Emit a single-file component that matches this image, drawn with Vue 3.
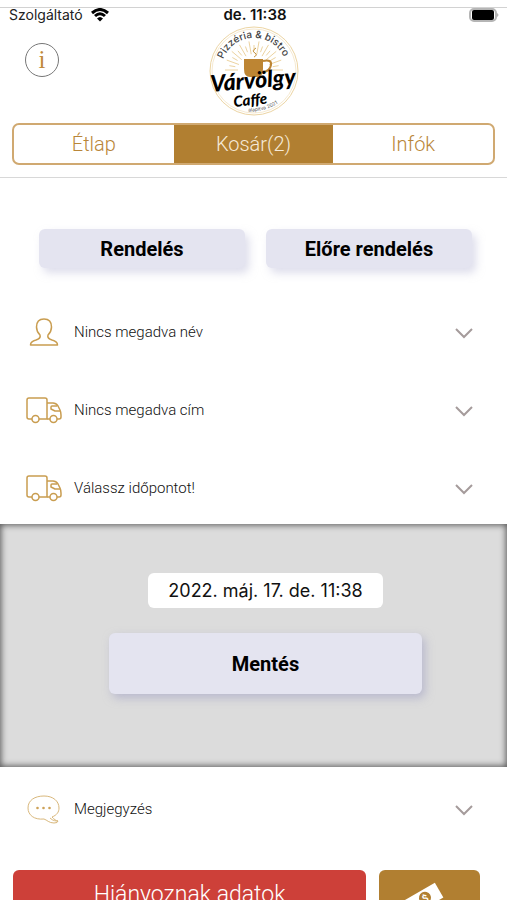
<template>
  <div class="screen">
    <div class="status-bar">
      <div class="carrier">
        <span>Szolgáltató</span>
        <svg class="wifi" viewBox="0 0 18 14" aria-hidden="true">
          <path d="M1 5 Q9 -2 17 5" />
          <path d="M4 8 Q9 3.500 14 8" />
          <path class="wifi-dot" d="M6 10.500 Q9 7.500 12 10.500 L9 13.500 Z" />
        </svg>
      </div>
      <div class="clock">de. 11:38</div>
      <svg class="battery" viewBox="0 0 32 14" aria-hidden="true">
        <rect x="1" y="1" width="26" height="12" rx="4" fill="#fff" stroke="#b5b5b5" stroke-width="2" />
        <rect x="3" y="2" width="22" height="10" rx="2" fill="#000" />
        <path d="M28 5 Q31 7 28 9 Z" fill="#b5b5b5" />
      </svg>
    </div>

    <header class="header">
      <div class="brand">
        <button class="info-button" type="button" aria-label="Info">i</button>
        <svg class="logo" viewBox="0 0 90 90" role="img" aria-label="Várvölgy Caffe">
          <circle cx="45" cy="45" r="44" fill="#fff" stroke="#ecd5a4" />
          <circle cx="45" cy="45" r="42" fill="none" stroke="#f6ead2" stroke-width="1" />
          <g stroke="#ecd3a0" stroke-width="1">
            <line v-for="ray in rays" :key="ray.id" :x1="ray.x1" :y1="ray.y1" :x2="ray.x2" :y2="ray.y2" />
          </g>
          <path id="logo-arc" d="M13 53 A33 33 0 1 1 77 53" fill="none" />
          <text class="logo-top"><textPath href="#logo-arc" startOffset="49%">Pizzéria &amp; bistro</textPath></text>
          <path d="M47 22 q-5 3 -1 5 q3 2 -1 4" fill="none" stroke="#c4923e" stroke-width="1" />
          <path d="M35 33 H54 V43 Q54 51 48 51 H41 Q35 51 35 43 Z" fill="#bd8533" />
          <path d="M54 35 q9 -2 8 4 q-1 6 -8 7" fill="none" stroke="#bd8533" stroke-width="2" />
          <text class="logo-name" x="2" y="66" transform="rotate(-5 2 66)">Várvölgy</text>
          <text class="logo-caffe" x="25" y="81" transform="rotate(-6 25 81)">Caffe</text>
          <path id="logo-foot" d="M33 85 Q55 88 74 74" fill="none" />
          <text class="logo-year"><textPath href="#logo-foot" startOffset="50%">alapítva 2021</textPath></text>
        </svg>
      </div>
      <nav class="tabs">
        <button
          v-for="tab in tabs"
          :key="tab.id"
          type="button"
          class="tab"
          :class="{ 'tab-active': tab.id === activeTab }"
          @click="activeTab = tab.id"
        >{{ tab.label }}</button>
      </nav>
    </header>

    <main class="content">
      <div class="order-types">
        <button class="soft-button" type="button">Rendelés</button>
        <button class="soft-button" type="button">Előre rendelés</button>
      </div>

      <button v-for="row in rows" :key="row.id" type="button" class="row">
        <svg v-if="row.icon === 'person'" class="row-icon" viewBox="0 0 36 30" aria-hidden="true">
          <path d="M18 2 C13 2 10.500 5 10.500 10 C10.500 14 12 16 14 18 C15 21 13 22 10 23 C6 24 4.500 25 4.500 28 H31.500 C31.500 25 30 24 26 23 C23 22 21 21 22 18 C24 16 25.500 14 25.500 10 C25.500 5 23 2 18 2 Z" />
        </svg>
        <svg v-else class="row-icon" viewBox="0 0 36 30" aria-hidden="true">
          <path d="M6 24 H3 Q1 24 1 22 V5 Q1 3 3 3 H19 Q21 3 21 5 V24 H13" />
          <path d="M21 8 H27 Q30 8 32 11 L34 15 Q35 17 35 20 V22 Q35 24 33 24 H31 M24 24 H21" />
          <path d="M34 16 H29 L25 14 V12 Q25 11 26 11 H31" />
          <circle cx="9.500" cy="24" r="3.500" />
          <circle cx="27.500" cy="24" r="3.500" />
        </svg>
        <span class="row-label">{{ row.label }}</span>
        <svg class="chevron" viewBox="0 0 20 12" aria-hidden="true"><path d="M2 1 L10 9 L18 1" /></svg>
      </button>

      <section class="time-panel">
        <input v-model="orderTime" class="time-input" type="text" aria-label="Időpont" />
        <button class="soft-button save-button" type="button">Mentés</button>
      </section>

      <button type="button" class="row">
        <svg class="row-icon note-icon" viewBox="0 0 36 30" aria-hidden="true">
          <path d="M24 24 C27 27 30 27 32 27 Q32 29 28 29 C23 29 21 26 18 25 C8 26 2 21 2 14 C2 6 9 2 18 2 C27 2 33 7 33 14 C33 18 31 21 26 23 C28 25 30 27 32 27" />
          <g class="note-dots">
            <circle cx="11.500" cy="14" r="1.300" />
            <circle cx="17.500" cy="14" r="1.300" />
            <circle cx="23.500" cy="14" r="1.300" />
          </g>
        </svg>
        <span class="row-label">Megjegyzés</span>
        <svg class="chevron" viewBox="0 0 20 12" aria-hidden="true"><path d="M2 1 L10 9 L18 1" /></svg>
      </button>

      <div class="actions">
        <button class="submit-button" type="button">Hiányoznak adatok</button>
        <button class="pay-button" type="button" aria-label="Fizetés">
          <svg class="money" viewBox="0 0 60 48" aria-hidden="true">
            <g transform="translate(24 26) rotate(-30)">
              <rect x="-22" y="-6" width="38" height="17" fill="#fff" />
              <circle cx="0" cy="2" r="6" fill="#b17f31" />
              <text x="0" y="6" class="money-sign">$</text>
            </g>
          </svg>
        </button>
      </div>
    </main>
  </div>
</template>

<script setup>
import { ref } from "vue";

const tabs = [
  { id: "menu", label: "Étlap" },
  { id: "cart", label: "Kosár(2)" },
  { id: "infos", label: "Infók" },
];
const activeTab = ref("cart");

const rows = [
  { id: "name", icon: "person", label: "Nincs megadva név" },
  { id: "address", icon: "truck", label: "Nincs megadva cím" },
  { id: "time", icon: "truck", label: "Válassz időpontot!" },
];

const orderTime = ref("2022. máj. 17. de. 11:38");

// sun rays behind the cup, alternating long and short
const rays = Array.from({ length: 19 }, (_, i) => {
  const angle = Math.PI + (Math.PI * i) / 18;
  const inner = i % 2 ? 19 : 16;
  const outer = i % 2 ? 25 : 29;
  return {
    id: i,
    x1: 45 + inner * Math.cos(angle),
    y1: 44 + inner * Math.sin(angle),
    x2: 45 + outer * Math.cos(angle),
    y2: 44 + outer * Math.sin(angle),
  };
});
</script>

<style>
body {
  margin: 0;
  background: #fff;
}
</style>

<style scoped>
.screen {
  box-sizing: border-box;
  height: 100vh;
  padding-top: 7px;
  overflow-y: auto;
  scrollbar-width: none;
  background: #fff;
  font-family: Roboto, "Liberation Sans", sans-serif;
}

button {
  margin: 0;
  padding: 0;
  border: none;
  background: none;
  font-family: inherit;
  cursor: pointer;
}

.status-bar {
  display: grid;
  grid-template-columns: 1fr auto 1fr;
  align-items: center;
  height: 10px;
  padding: 0 6px 0 9px;
  border-top: 1px solid #d2d2d2;
  font-family: Inter, "Liberation Sans", sans-serif;
  font-size: 14px;
  line-height: 10px;
  color: #222;
}

.carrier {
  display: flex;
  align-items: center;
  gap: 8px;
}

.wifi {
  width: 18px;
  height: 14px;
  fill: none;
  stroke: #000;
  stroke-width: 3;
}

.wifi .wifi-dot {
  fill: #000;
  stroke: none;
}

.clock {
  font-size: 15px;
  font-weight: 600;
  color: #111;
}

.battery {
  width: 32px;
  height: 14px;
  justify-self: end;
}

.header {
  padding: 8px 12px 12px;
  border-bottom: 1px solid #d8d8d8;
}

.brand {
  display: grid;
  grid-template-columns: 1fr auto 1fr;
  align-items: start;
}

.info-button {
  width: 34px;
  height: 34px;
  margin: 17px 0 0 13px;
  border: 1px solid #777;
  border-radius: 50%;
  font-family: "Liberation Serif", serif;
  font-size: 25px;
  line-height: 30px;
  color: #c08a3a;
}

.logo {
  width: 90px;
  height: 90px;
}

.logo-top {
  font-family: Inter, sans-serif;
  font-size: 10px;
  font-weight: 500;
  text-anchor: middle;
  fill: #444;
}

.logo-name {
  font-family: Lato, sans-serif;
  font-size: 23px;
  font-style: italic;
  font-weight: 900;
  fill: #000;
}

.logo-caffe {
  font-family: Lato, sans-serif;
  font-size: 15px;
  font-style: italic;
  font-weight: 900;
  fill: #000;
}

.logo-year {
  font-family: Inter, sans-serif;
  font-size: 5px;
  text-anchor: middle;
  fill: #555;
}

.tabs {
  display: flex;
  height: 38px;
  margin-top: 7px;
  overflow: hidden;
  border: 2px solid #d0a971;
  border-radius: 7px;
}

.tab {
  flex: 1;
  font-size: 20px;
  font-weight: 300;
  color: #b98639;
}

.tab-active {
  background: #b17f31;
  color: #f6ead8;
}

.order-types {
  display: flex;
  gap: 21px;
  padding: 51px 35px 22px 39px;
}

.soft-button {
  flex: 1;
  height: 39px;
  border-radius: 6px;
  background: #e4e4f0;
  box-shadow: 4px 5px 8px rgba(190, 190, 218, 0.5);
  font-size: 20px;
  font-weight: 700;
  line-height: 36px;
  color: #000;
}

.row {
  display: flex;
  align-items: center;
  box-sizing: border-box;
  width: 100%;
  height: 78px;
  padding: 5px 33px 0 26px;
  text-align: left;
}

.row-icon {
  width: 36px;
  height: 30px;
  fill: none;
  stroke: #c99d50;
  stroke-width: 1.500;
  stroke-linejoin: round;
}

.note-icon {
  stroke: #d9b87c;
  stroke-width: 1;
}

.note-dots {
  fill: #cda258;
  stroke: none;
}

.row-label {
  flex: 1;
  margin-left: 12px;
  font-size: 15px;
  font-weight: 300;
  color: #111;
}

.chevron {
  width: 20px;
  height: 12px;
  margin-top: 4px;
  fill: none;
  stroke: #a59b9b;
  stroke-width: 2;
}

.time-panel {
  display: flex;
  flex-direction: column;
  align-items: center;
  gap: 25px;
  padding: 49px 0 73px 24px;
  background: #dcdcdc;
  box-shadow: inset 0 0 6px 1px #555;
}

.time-input {
  box-sizing: border-box;
  width: 235px;
  height: 35px;
  padding: 0;
  border: none;
  border-radius: 6px;
  background: #fff;
  font-family: Inter, "Liberation Sans", sans-serif;
  font-size: 18px;
  text-align: center;
  color: #111;
}

.save-button {
  flex: none;
  width: 65%;
  height: 61px;
  box-shadow: 3px 4px 10px rgba(160, 160, 195, 0.6);
}

.actions {
  display: flex;
  gap: 13px;
  padding: 25px 27px 24px 13px;
}

.submit-button {
  flex: 7;
  height: 48px;
  border-radius: 6px;
  background: #cd4039;
  font-size: 23px;
  font-weight: 300;
  color: #fff;
}

.pay-button {
  display: flex;
  flex: 2;
  align-items: center;
  justify-content: center;
  height: 48px;
  border-radius: 6px;
  background: #b17f31;
}

.money {
  width: 60px;
  height: 48px;
}

.money-sign {
  font-size: 10px;
  font-weight: 700;
  text-anchor: middle;
  fill: #fff;
}
</style>
